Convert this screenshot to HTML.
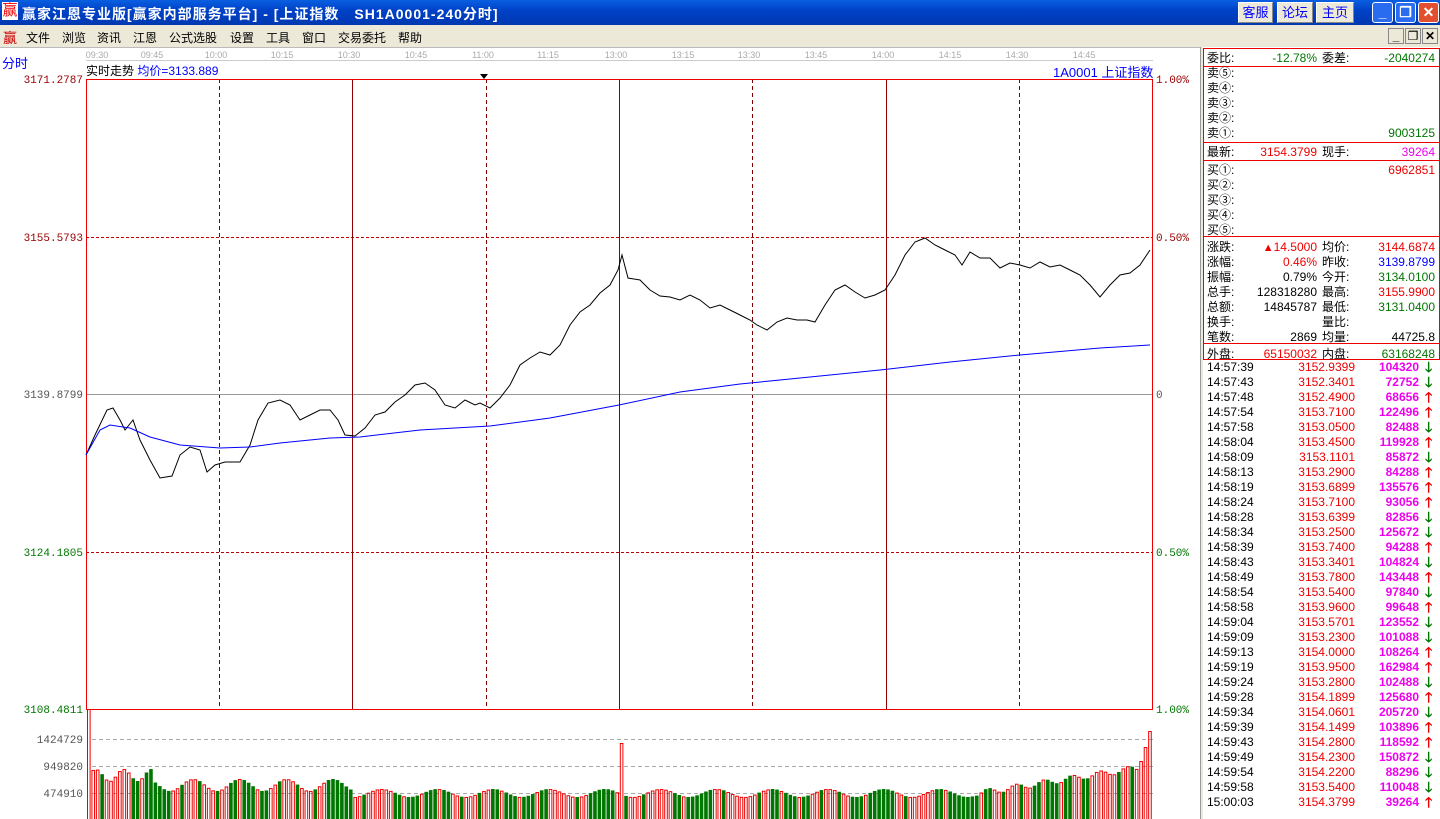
<!DOCTYPE html>
<html><head><meta charset="utf-8"><style>
*{margin:0;padding:0;box-sizing:border-box}
body{width:1440px;height:819px;overflow:hidden;background:#fff;font-family:"Liberation Sans","Noto Sans CJK SC","WenQuanYi Zen Hei",sans-serif;font-size:12px;position:relative}
.a{position:absolute;white-space:nowrap}
#title{left:0;top:0;width:1440px;height:25px;background:linear-gradient(#0a5fe0,#0042c8 40%,#0038b0);color:#fff;font-size:14px}
#menu{left:0;top:25px;width:1440px;height:22px;background:#ece9d8;font-size:12px}
.btn{position:absolute;top:2px;height:21px;background:#ece9d8;border:1px solid #fff;border-right-color:#888;border-bottom-color:#888;color:#00f;font-size:13px;text-align:center;line-height:19px;font-weight:normal}
.wb{position:absolute;top:2px;width:21px;height:21px;border:1px solid #fff;border-radius:3px;background:#2a6cf0;color:#fff;text-align:center;font-weight:bold;line-height:19px}
.r{text-align:right}
.panel div{height:15px;line-height:15px}
</style></head><body>
<div id="title" class="a">
 <span class="a" style="left:2px;top:2px;color:#e00;font-size:15px;background:#fff;width:16px;height:18px;line-height:18px;text-align:center">赢</span>
 <span class="a" style="left:22px;top:4px;font-weight:bold;letter-spacing:1px">赢家江恩专业版[赢家内部服务平台] - [上证指数　SH1A0001-240分时]</span>
 <div class="btn" style="left:1238px;width:35px">客服</div>
 <div class="btn" style="left:1277px;width:36px">论坛</div>
 <div class="btn" style="left:1316px;width:38px">主页</div>
 <div class="wb" style="left:1372px">_</div>
 <div class="wb" style="left:1395px">❐</div>
 <div class="wb" style="left:1418px;background:#e05030">✕</div>
</div>
<div id="menu" class="a">
 <span class="a" style="left:3px;top:3px;color:#c00;font-size:14px">赢</span>
 <span class="a" style="left:26px;top:4px">文件</span>
 <span class="a" style="left:62px;top:4px">浏览</span>
 <span class="a" style="left:97px;top:4px">资讯</span>
 <span class="a" style="left:133px;top:4px">江恩</span>
 <span class="a" style="left:169px;top:4px">公式选股</span>
 <span class="a" style="left:230px;top:4px">设置</span>
 <span class="a" style="left:266px;top:4px">工具</span>
 <span class="a" style="left:302px;top:4px">窗口</span>
 <span class="a" style="left:338px;top:4px">交易委托</span>
 <span class="a" style="left:398px;top:4px">帮助</span>
 <span class="a" style="left:1388px;top:3px;width:16px;height:16px;border:1px solid #888;background:#ece9d8;text-align:center;line-height:14px;font-weight:bold">_</span>
 <span class="a" style="left:1405px;top:3px;width:16px;height:16px;border:1px solid #888;text-align:center;line-height:14px">❐</span>
 <span class="a" style="left:1422px;top:3px;width:16px;height:16px;border:1px solid #888;text-align:center;line-height:14px;font-weight:bold">✕</span>
</div>
<div class="a" style="left:0;top:47px;width:1200px;height:1px;background:#bbb"></div>
<div class="a" style="left:1200px;top:47px;width:3px;height:772px;background:#ece9d8;border-left:1px solid #999"></div>
<span class="a" style="left:2px;top:53px;color:#00f;font-size:13px">分时</span>
<span class="a" style="left:86px;top:62px;font-size:12px">实时走势 <span style="color:#00f">均价=3133.889</span></span>
<span class="a" style="left:1053px;top:62px;color:#00f;font-size:13px">1A0001 上证指数</span>
<svg class="a" style="left:0;top:48px" width="1200" height="771">
<g font-family="Liberation Sans" font-size="9" fill="#aaa" text-anchor="middle">
<text x="97" y="10">09:30</text><text x="152" y="10">09:45</text><text x="216" y="10">10:00</text><text x="282" y="10">10:15</text><text x="349" y="10">10:30</text><text x="416" y="10">10:45</text><text x="483" y="10">11:00</text><text x="548" y="10">11:15</text><text x="616" y="10">13:00</text><text x="683" y="10">13:15</text><text x="749" y="10">13:30</text><text x="816" y="10">13:45</text><text x="883" y="10">14:00</text><text x="950" y="10">14:15</text><text x="1017" y="10">14:30</text><text x="1084" y="10">14:45</text>
</g>
<line x1="86" y1="12.5" x2="1153" y2="12.5" stroke="#ccc"/>
<polygon points="480,26 488,26 484,31" fill="#000"/>
</svg>
<svg class="a" style="left:0;top:0" width="1200" height="819" font-family="Liberation Mono" font-size="11">
<g stroke="#800000" stroke-dasharray="4,3">
<line x1="219.5" y1="79" x2="219.5" y2="709"/><line x1="486.5" y1="79" x2="486.5" y2="709"/><line x1="752.5" y1="79" x2="752.5" y2="709"/><line x1="1019.5" y1="79" x2="1019.5" y2="709"/>
</g>
<g stroke="#c00000" stroke-dasharray="3,2">
<line x1="86" y1="237.5" x2="1153" y2="237.5"/><line x1="86" y1="552.5" x2="1153" y2="552.5"/>
</g>
<line x1="86" y1="394.5" x2="1153" y2="394.5" stroke="#999"/>
<g stroke="#900000"><line x1="352.5" y1="79" x2="352.5" y2="709"/><line x1="619.5" y1="79" x2="619.5" y2="709"/><line x1="886.5" y1="79" x2="886.5" y2="709"/></g>
<rect x="86.5" y="79.5" width="1066" height="630" fill="none" stroke="#e00"/>
<g stroke="#aaa" stroke-dasharray="4,3"><line x1="92" y1="739.5" x2="1153" y2="739.5"/><line x1="92" y1="766.5" x2="1153" y2="766.5"/><line x1="92" y1="793.5" x2="1153" y2="793.5"/></g>
<g text-anchor="end">
<text x="83" y="83" fill="#900">3171.2787</text>
<text x="83" y="241" fill="#900">3155.5793</text>
<text x="83" y="398" fill="#555">3139.8799</text>
<text x="83" y="556" fill="#070">3124.1805</text>
<text x="83" y="713" fill="#070">3108.4811</text>
<text x="83" y="743" fill="#555">1424729</text>
<text x="83" y="770" fill="#555">949820</text>
<text x="83" y="797" fill="#555">474910</text>
</g>
<g>
<text x="1156" y="83" fill="#900">1.00%</text>
<text x="1156" y="241" fill="#900">0.50%</text>
<text x="1156" y="398" fill="#555">0</text>
<text x="1156" y="556" fill="#070">0.50%</text>
<text x="1156" y="713" fill="#070">1.00%</text>
</g>
<polyline fill="none" stroke="#000" points="86,455 95,435 107,410 113,408 120,420 125,430 133,420 140,440 150,460 160,478 172,476 180,455 190,447 200,450 207,472 215,465 225,462 240,462 250,445 258,420 268,403 280,400 290,405 300,420 310,415 320,410 330,410 338,420 345,435 355,436 365,428 375,415 385,412 395,402 405,395 415,385 425,383 435,390 445,405 455,408 465,400 475,405 480,403 490,408 500,398 510,385 520,365 530,358 540,352 550,355 560,345 570,325 580,312 590,305 600,293 610,285 618,270 622,255 628,278 640,280 650,290 660,296 670,297 680,300 690,295 700,300 710,308 720,305 730,310 740,315 750,320 757,325 767,330 777,322 787,318 797,320 807,320 815,322 825,305 835,290 845,285 855,292 865,298 875,295 885,290 895,275 905,255 915,242 925,238 935,245 945,250 955,255 962,265 970,252 980,258 990,258 1000,268 1010,263 1020,265 1030,268 1040,262 1050,267 1060,265 1070,270 1080,275 1090,285 1100,297 1110,285 1120,275 1130,273 1140,265 1150,250"/>
<polyline fill="none" stroke="#00f" points="86,455 100,430 110,425 130,428 150,437 180,445 220,448 250,447 280,443 330,438 360,437 420,430 490,426 550,418 619,405 680,392 740,384 800,378 880,370 950,362 1020,355 1100,348 1150,345"/>
<g id="vol"></g>
</svg>
<div class="a panel" style="left:1203px;top:48px;width:237px;height:771px">
 <div class="a" style="left:0;top:0;width:237px;height:19px;border:1px solid #e00"></div>
 <div class="a" style="left:0;top:18px;width:237px;height:77px;border:1px solid #e00;border-top:0"></div>
 <div class="a" style="left:0;top:94px;width:237px;height:19px;border:1px solid #e00;border-top:0"></div>
 <div class="a" style="left:0;top:112px;width:237px;height:77px;border:1px solid #e00;border-top:0"></div>
 <div class="a" style="left:0;top:188px;width:237px;height:108px;border:1px solid #e00;border-top:0"></div>
 <div class="a" style="left:0;top:295px;width:237px;height:17px;border:1px solid #e00;border-top:0"></div>
 <div id="rt" class="a" style="left:0;top:3px;width:237px"></div>
 <div id="tk" class="a" style="left:0;top:312px;width:237px"></div>
</div>
<script>
var rt=document.getElementById('rt'),h='';
function row(y,l1,v1,c1,l2,v2,c2){h+='<div class="a" style="left:4px;top:'+y+'px">'+l1+'</div><div class="a r" style="left:0;width:114px;top:'+y+'px;color:'+c1+'">'+v1+'</div><div class="a" style="left:119px;top:'+y+'px">'+l2+'</div><div class="a r" style="left:0;width:232px;top:'+y+'px;color:'+c2+'">'+v2+'</div>';}
row(0,'委比:','-12.78%','#070','委差:','-2040274','#070');
['卖⑤:','卖④:','卖③:','卖②:','卖①:'].forEach(function(s,i){row(15+15*i,s,'','#000','',i==4?'9003125':'','#070');});
row(94,'最新:','3154.3799','#e00','现手:','39264','#e0e');
['买①:','买②:','买③:','买④:','买⑤:'].forEach(function(s,i){row(112+15*i,s,'','#000','',i==0?'6962851':'','#e00');});
row(189,'涨跌:','<span style="font-size:11px">▲</span>14.5000','#e00','均价:','3144.6874','#e00');
row(204,'涨幅:','0.46%','#e00','昨收:','3139.8799','#00f');
row(219,'振幅:','0.79%','#000','今开:','3134.0100','#070');
row(234,'总手:','128318280','#000','最高:','3155.9900','#e00');
row(249,'总额:','14845787','#000','最低:','3131.0400','#070');
row(264,'换手:','','#000','量比:','','#000');
row(279,'笔数:','2869','#000','均量:','44725.8','#000');
row(296,'外盘:','65150032','#e00','内盘:','63168248','#070');
rt.innerHTML=h;
var t=[['14:57:39','3152.9399','104320',0],['14:57:43','3152.3401','72752',0],['14:57:48','3152.4900','68656',1],['14:57:54','3153.7100','122496',1],['14:57:58','3153.0500','82488',0],['14:58:04','3153.4500','119928',1],['14:58:09','3153.1101','85872',0],['14:58:13','3153.2900','84288',1],['14:58:19','3153.6899','135576',1],['14:58:24','3153.7100','93056',1],['14:58:28','3153.6399','82856',0],['14:58:34','3153.2500','125672',0],['14:58:39','3153.7400','94288',1],['14:58:43','3153.3401','104824',0],['14:58:49','3153.7800','143448',1],['14:58:54','3153.5400','97840',0],['14:58:58','3153.9600','99648',1],['14:59:04','3153.5701','123552',0],['14:59:09','3153.2300','101088',0],['14:59:13','3154.0000','108264',1],['14:59:19','3153.9500','162984',1],['14:59:24','3153.2800','102488',0],['14:59:28','3154.1899','125680',1],['14:59:34','3154.0601','205720',0],['14:59:39','3154.1499','103896',1],['14:59:43','3154.2800','118592',1],['14:59:49','3154.2300','150872',0],['14:59:54','3154.2200','88296',0],['14:59:58','3153.5400','110048',0],['15:00:03','3154.3799','39264',1]];
h='';t.forEach(function(r,i){var y=i*15;h+='<div class="a" style="left:4px;top:'+y+'px">'+r[0]+'</div><div class="a r" style="left:0;width:152px;top:'+y+'px;color:#e00">'+r[1]+'</div><div class="a r" style="left:0;width:216px;top:'+y+'px;color:#e0e;font-weight:bold">'+r[2]+'</div><div class="a" style="left:222px;top:'+y+'px;color:'+(r[3]?'#e00':'#070')+';font-weight:bold;font-size:14px">'+(r[3]?'🡑':'🡓')+'</div>';});
document.getElementById('tk').innerHTML=h;
var v='';
for(var i=0;i<240;i++){var x=87+i*4.44;var ht;
if(i<15)ht=44+Math.sin(i)*6;else if(i<60)ht=34+Math.sin(i*0.6)*6;else if(i<200)ht=26+Math.sin(i*0.5)*4;else ht=26+(i-200)*0.7+Math.sin(i)*3;
if(i==239)ht=88;if(i==238)ht=72;if(i==237)ht=58;if(i==120)ht=76;if(i==0)ht=110;
var red=(Math.sin(i*1.7)+Math.sin(i*0.31))>0;if(i==0||i==120||i>=236)red=true;
if(red)v+='<rect x="'+(x+0.5)+'" y="'+(819-ht+0.5)+'" width="2.6" height="'+ht+'" fill="none" stroke="#e00"/>';
else v+='<rect x="'+x+'" y="'+(819-ht)+'" width="3.6" height="'+ht+'" fill="#070"/>';}
document.getElementById('vol').innerHTML=v;
</script>
</body></html>
